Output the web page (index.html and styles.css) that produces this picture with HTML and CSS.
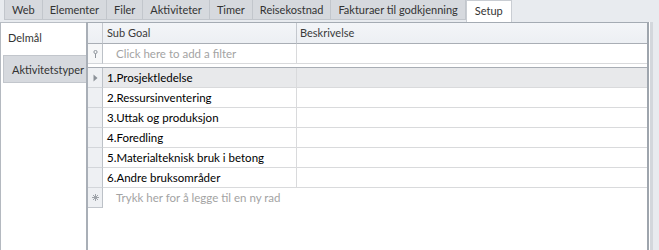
FILE: index.html
```html
<!DOCTYPE html>
<html>
<head>
<meta charset="utf-8">
<link rel="stylesheet" href="styles.css">
</head>
<body>
<div class="app">
  <div class="tabstrip">
    <div class="tab">Web</div>
    <div class="tab">Elementer</div>
    <div class="tab">Filer</div>
    <div class="tab">Aktiviteter</div>
    <div class="tab">Timer</div>
    <div class="tab">Reisekostnad</div>
    <div class="tab">Fakturaer til godkjenning</div>
    <div class="tab active">Setup</div>
  </div>
  <div class="page">
    <div class="side">
      <div class="vtab active">Delmål</div>
      <div class="vtab">Aktivitetstyper</div>
    </div>
    <div class="grid">
      <div class="row header">
        <div class="ind"></div>
        <div class="cell c1">Sub Goal</div>
        <div class="cell c2">Beskrivelse</div>
      </div>
      <div class="row filter">
        <div class="ind"><svg width="5" height="8" viewBox="0 0 5 8"><circle cx="2.5" cy="2" r="1.6" fill="none" stroke="#8e949b" stroke-width="1"/><line x1="2.5" y1="3.5" x2="2.5" y2="8" stroke="#8e949b" stroke-width="1"/></svg></div>
        <div class="cell c1 hint">Click here to add a filter</div>
        <div class="cell c2"></div>
      </div>
      <div class="row gap">
        <div class="ind"></div>
        <div class="cell c1"></div>
        <div class="cell c2"></div>
      </div>
      <div class="row data selected">
        <div class="ind"><svg width="5" height="8" viewBox="0 0 5 8"><polygon points="0.5,0.5 4.5,4 0.5,7.5" fill="#8b9198"/></svg></div>
        <div class="cell c1">1.Prosjektledelse</div>
        <div class="cell c2"></div>
      </div>
      <div class="row data">
        <div class="ind"></div>
        <div class="cell c1">2.Ressursinventering</div>
        <div class="cell c2"></div>
      </div>
      <div class="row data">
        <div class="ind"></div>
        <div class="cell c1">3.Uttak og produksjon</div>
        <div class="cell c2"></div>
      </div>
      <div class="row data">
        <div class="ind"></div>
        <div class="cell c1">4.Foredling</div>
        <div class="cell c2"></div>
      </div>
      <div class="row data">
        <div class="ind"></div>
        <div class="cell c1">5.Materialteknisk bruk i betong</div>
        <div class="cell c2"></div>
      </div>
      <div class="row data">
        <div class="ind"></div>
        <div class="cell c1">6.Andre bruksområder</div>
        <div class="cell c2"></div>
      </div>
      <div class="row newrow">
        <div class="ind"><svg width="7" height="7" viewBox="0 0 7 7"><g stroke="#9ea3a9" stroke-width="1"><line x1="3.5" y1="0" x2="3.5" y2="7"/><line x1="0" y1="3.5" x2="7" y2="3.5"/><line x1="1" y1="1" x2="6" y2="6"/><line x1="6" y1="1" x2="1" y2="6"/></g></svg></div>
        <div class="cell hint wide">Trykk her for å legge til en ny rad</div>
      </div>
    </div>
    <div class="edge"></div>
  </div>
</div>
</body>
</html>
```
FILE: styles.css
```css
* { box-sizing: border-box; }
html, body {
  margin: 0;
  padding: 0;
}
body {
  width: 659px;
  height: 250px;
  overflow: hidden;
  background: #e8ebef;
  font-family: Lato, "Liberation Sans", sans-serif;
  font-size: 11px;
  color: #2f2f2f;
}
.app {
  display: flex;
  flex-direction: column;
  height: 250px;
}
.tabstrip {
  display: flex;
  align-items: flex-start;
  height: 22px;
  padding-left: 4px;
}
.tab {
  height: 20px;
  line-height: 19px;
  padding: 0 7px;
  background: #d6d9de;
  border: 1px solid #c2c6cc;
  border-top: none;
  border-right: none;
  color: #333;
}
.tab:nth-last-child(2) { border-right: 1px solid #c2c6cc; }
.tab.active {
  height: 22px;
  background: #fff;
  border: 1px solid #c9cdd3;
  border-bottom: none;
  line-height: 20px;
  padding: 0 8px;
}
.page {
  display: flex;
  flex: 1;
}
.side {
  width: 86px;
  background: #fff;
  border-left: 1px solid #b4b9c0;
  border-top: 1px solid #b9bec5;
}
.vtab {
  height: 28px;
  line-height: 28px;
  padding-left: 8px;
  color: #333;
}
.vtab.active {
  height: 31px;
  line-height: 30px;
  margin-bottom: 1px;
  background: #fff;
  padding-left: 7px;
}
.vtab:not(.active) {
  margin-left: 2px;
  background: #d6d9de;
  border: 1px solid #c2c6cc;
  border-right: none;
  padding-left: 8px;
}
.grid {
  width: 563px;
  background: #fff;
  border-top: 1px solid #a4abb3;
  border-left: 2px solid #a9afb7;
  border-right: 2px solid #9ea5ad;
  display: flex;
  flex-direction: column;
  font-size: 11.5px;
}
.row {
  display: flex;
  height: 20px;
}
.ind {
  width: 15px;
  flex: none;
  background: #eef0f3;
  border-right: 1px solid #bcc1c7;
  border-bottom: 1px solid #d3d6da;
  display: flex;
  align-items: center;
  justify-content: center;
}
.cell {
  height: 100%;
  line-height: 19px;
  white-space: nowrap;
  overflow: hidden;
}
.c1 {
  width: 194px;
  flex: none;
  border-right: 1px solid #d9dadc;
  border-bottom: 1px solid #d9dadc;
  padding-left: 4px;
}
.c2 {
  flex: 1;
  border-bottom: 1px solid #d9dadc;
  padding-left: 3px;
}
.header {
  height: 21px;
  background: linear-gradient(#f3f5f8, #eceff3);
}
.header .ind {
  background: transparent;
  border-bottom: 1px solid #a9aeb5;
  border-right: 1px solid #c4c8ce;
}
.header .cell {
  color: #3a3a3a;
  border-bottom: 1px solid #a9aeb5;
  border-right-color: #c4c8ce;
  line-height: 20px;
  font-size: 11px;
}
.filter .ind { background: #f6f7f8; }
.hint {
  color: #a3a3a3;
  padding-left: 13px;
}
.gap { height: 4px; }
.gap .ind { background: #fff; border-bottom: 1px solid #a8adb4; border-right: none; }
.gap .cell { border-bottom: 1px solid #a8adb4; border-right: none; }
.data .cell { color: #000; }
.selected .cell { background: #e8e9eb; }
.newrow .ind { border-bottom: 1px solid #c2c6cc; }
.newrow .wide { flex: 1; }
.edge {
  width: 4px;
  background: #fff;
  border-right: 3px solid #d3d7dc;
  flex: none;
}
```
